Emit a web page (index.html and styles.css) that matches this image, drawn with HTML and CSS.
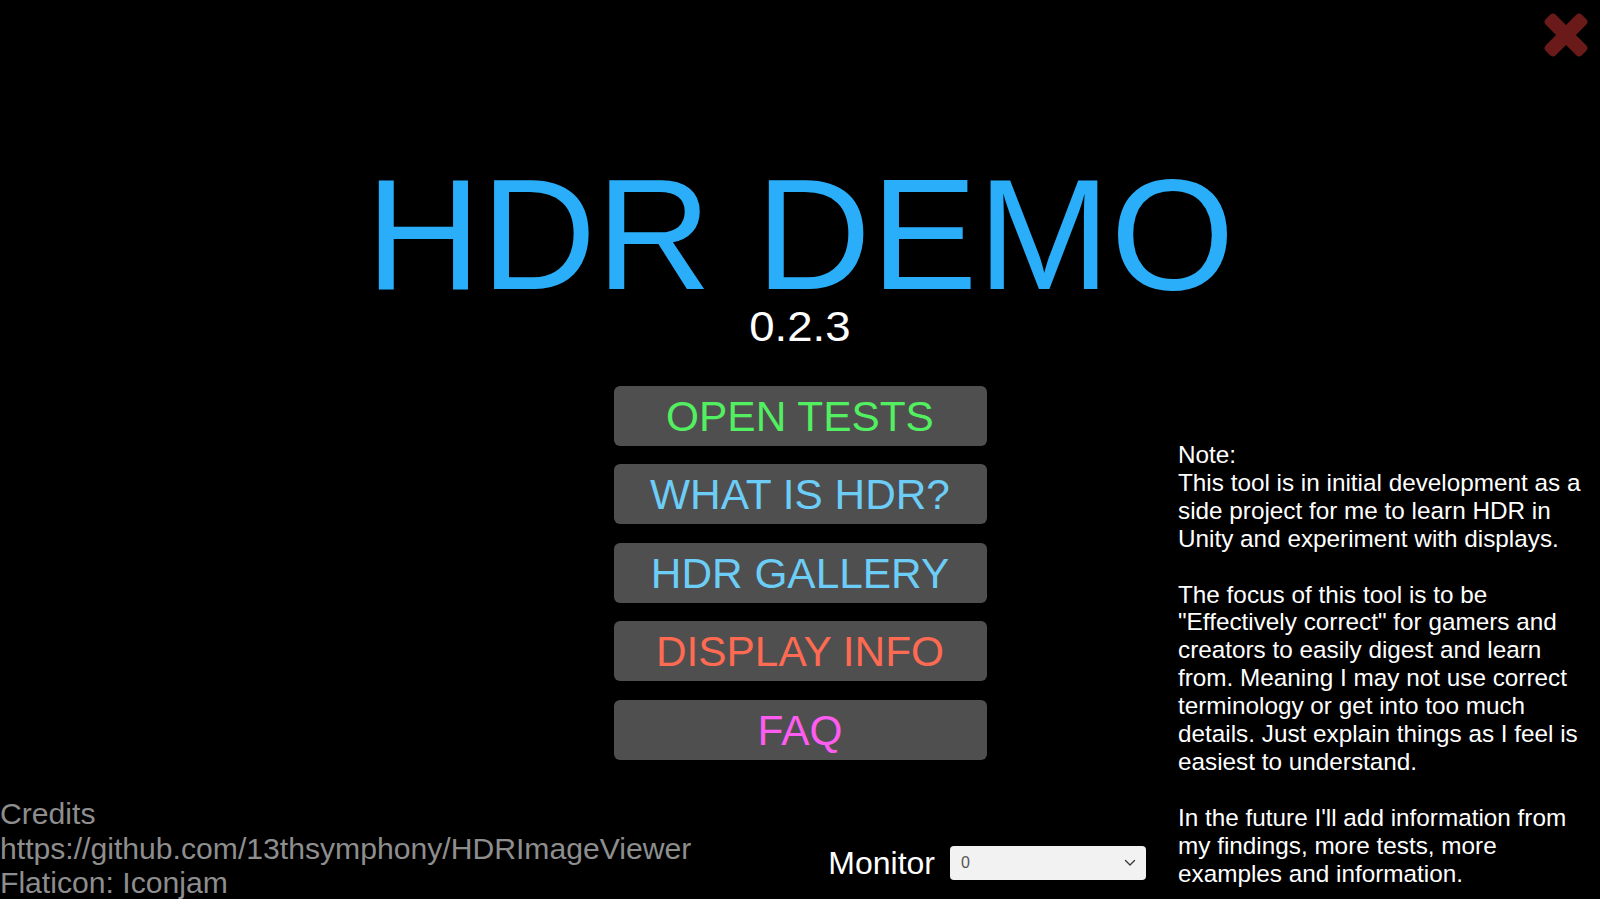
FILE: index.html
```html
<!DOCTYPE html>
<html lang="en">
<head>
<meta charset="utf-8">
<title>HDR DEMO</title>
<link rel="stylesheet" href="styles.css">
</head>
<body>
<div class="screen">
  <button class="close" aria-label="Close">
    <svg width="46" height="46" viewBox="0 0 46 46">
      <g transform="translate(23 23)" fill="#6b1a1a">
        <rect x="-25.5" y="-7" width="51" height="14" rx="4" transform="rotate(45)"/>
        <rect x="-25.5" y="-7" width="51" height="14" rx="4" transform="rotate(-45)"/>
      </g>
    </svg>
  </button>

  <main class="menu">
    <h1 class="title"><span class="title-text">HDR DEMO</span></h1>
    <div class="version"><span class="version-text">0.2.3</span></div>
    <nav class="buttons">
      <button class="btn btn-green">OPEN TESTS</button>
      <button class="btn btn-blue">WHAT IS HDR?</button>
      <button class="btn btn-blue">HDR GALLERY</button>
      <button class="btn btn-red">DISPLAY INFO</button>
      <button class="btn btn-pink">FAQ</button>
    </nav>
  </main>

  <aside class="note">
    <p>Note:<br>This tool is in initial development as a<br>side project for me to learn HDR in<br>Unity and experiment with displays.</p>
    <p>The focus of this tool is to be<br>"Effectively correct" for gamers and<br>creators to easily digest and learn<br>from. Meaning I may not use correct<br>terminology or get into too much<br>details. Just explain things as I feel is<br>easiest to understand.</p>
    <p>In the future I'll add information from<br>my findings, more tests, more<br>examples and information.</p>
  </aside>

  <footer class="footer">
    <div class="credits">
      <div>Credits</div>
      <div>https://github.com/13thsymphony/HDRImageViewer</div>
      <div>Flaticon: Iconjam</div>
    </div>
    <div class="monitor">
      <span class="monitor-label">Monitor</span>
      <div class="select">
        <span class="select-value">0</span>
        <svg class="chevron" width="12" height="8" viewBox="0 0 12 8"><path d="M1.5 1.5 L6 6 L10.5 1.5" fill="none" stroke="#3c3c3c" stroke-width="1.4" stroke-linecap="round" stroke-linejoin="round"/></svg>
      </div>
    </div>
  </footer>
</div>
</body>
</html>
```

FILE: styles.css
```css
html, body {
  margin: 0;
  padding: 0;
  background: #000;
}

body {
  font-family: "Liberation Sans", Arial, sans-serif;
  overflow: hidden;
}

.screen {
  width: 1600px;
  height: 899px;
  display: grid;
  grid-template-columns: 1178px 422px;
  grid-template-rows: 441px 354px 104px;
  overflow: hidden;
  background: #000;
}

.close {
  grid-column: 2;
  grid-row: 1;
  justify-self: end;
  align-self: start;
  margin: 12px 11px 0 0;
  width: 46px;
  height: 46px;
  padding: 0;
  border: 0;
  background: none;
  z-index: 2;
}

.close svg {
  display: block;
}

.menu {
  grid-column: 1 / 3;
  grid-row: 1 / 3;
  display: flex;
  flex-direction: column;
  align-items: center;
  padding-top: 164.25px;
}

.title {
  margin: 0;
  font-family: "Liberation Sans", Arial, sans-serif;
  font-weight: 400;
  font-size: 158px;
  line-height: 140px;
  color: #2aaefa;
  white-space: nowrap;
}

.title-text {
  display: inline-block;
  transform: scaleX(1.01);
}

.version {
  margin-top: 1.75px;
  font-size: 43px;
  line-height: 40px;
  color: #fff;
}

.version-text {
  display: inline-block;
  transform: scaleX(1.06);
}

.buttons {
  margin-top: 39.7px;
  display: flex;
  flex-direction: column;
  gap: 18.6px;
}

.btn {
  width: 373px;
  height: 60px;
  padding: 1px 0 0;
  border: 0;
  border-radius: 6px;
  background: #4f4f4f;
  font-family: "Liberation Sans", Arial, sans-serif;
  font-size: 42.4px;
  line-height: 59px;
}

.btn-green { color: #52f060; }
.btn-blue { color: #6ccdf6; }
.btn-red { color: #ff6a52; }
.btn-pink { color: #ff5cf2; }

.note {
  grid-column: 2;
  grid-row: 2 / 4;
  font-size: 24.3px;
  line-height: 27.9px;
  color: #fff;
  white-space: nowrap;
}

.note p {
  margin: 0 0 27.9px;
}

.footer {
  grid-column: 1;
  grid-row: 3;
  display: flex;
  justify-content: space-between;
  align-items: flex-end;
  padding-right: 32px;
}

.credits {
  font-size: 30.15px;
  line-height: 34.7px;
  color: #8e8e8e;
  white-space: nowrap;
  margin-bottom: -2px;
}

.monitor {
  display: flex;
  align-items: center;
  gap: 15px;
  margin-bottom: 19px;
}

.monitor-label {
  font-size: 32px;
  line-height: 34px;
  color: #fff;
}

.select {
  width: 196px;
  height: 34px;
  box-sizing: border-box;
  padding: 0 10px 0 11px;
  display: flex;
  align-items: center;
  justify-content: space-between;
  background: #f2f2f2;
  border-radius: 4px;
  color: #555;
  font-size: 16px;
}

.chevron {
  display: block;
}
```
